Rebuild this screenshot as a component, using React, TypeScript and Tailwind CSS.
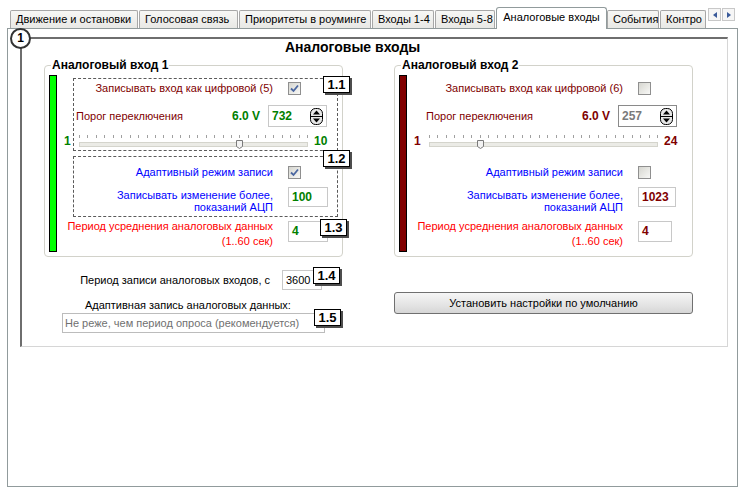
import React from 'react';

type GroupData = {
  n: number;
  title: string;
  bar: string;
  dash: string;
  tone: string;
  digital: boolean;
  adaptive: boolean;
  threshold: string;
  thresholdTone: string;
  thresholdBorder: string;
  max: string;
  thumb: number;
  adc: string;
  adcWidth: string;
  avgWidth: string;
  badges: boolean;
};

const groups: GroupData[] = [
  {
    n: 5,
    title: 'Аналоговый вход 1',
    bar: 'bg-[#00ff00]',
    dash: 'border-[#5a5a5a]',
    tone: 'text-[#008000]',
    digital: true,
    adaptive: true,
    threshold: '732',
    thresholdTone: 'text-[#008000]',
    thresholdBorder: 'border-[#c8c8c8]',
    max: '10',
    thumb: 157,
    adc: '100',
    adcWidth: 'w-[40px]',
    avgWidth: 'w-[40px]',
    badges: true,
  },
  {
    n: 6,
    title: 'Аналоговый вход 2',
    bar: 'bg-[#800000]',
    dash: 'border-transparent',
    tone: 'text-[#800000]',
    digital: false,
    adaptive: false,
    threshold: '257',
    thresholdTone: 'text-[#7a7a7a]',
    thresholdBorder: 'border-[#8a8a8a]',
    max: '24',
    thumb: 48,
    adc: '1023',
    adcWidth: 'w-[38px]',
    avgWidth: 'w-[34px]',
    badges: false,
  },
];

const tabs = [
  { label: 'Движение и остановки', w: 'w-[128px]', ml: 'ml-0' },
  { label: 'Голосовая связь', w: 'w-[99px]', ml: 'ml-[1px]' },
  { label: 'Приоритеты в роуминге', w: 'w-[132px]', ml: 'ml-[1px]' },
  { label: 'Входы 1-4', w: 'w-[62px]', ml: 'ml-[1px]' },
  { label: 'Входы 5-8', w: 'w-[60px]', ml: 'ml-[1px]' },
  { label: 'Аналоговые входы', w: 'w-[111px]', ml: 'ml-[1px]', active: true },
  { label: 'События', w: 'w-[52px]', ml: 'ml-0' },
  { label: 'Контро', w: 'w-[46px]', ml: 'ml-[1px]' },
];

function Badge({ text, className }: { text: string; className: string }) {
  return (
    <div
      className={`absolute z-10 flex h-[17px] w-[27px] items-center justify-center border border-black bg-white text-[13px] font-bold leading-none text-black shadow-[2px_2px_0_#4d4d4d] ${className}`}
    >
      {text}
    </div>
  );
}

function Check({ checked }: { checked: boolean }) {
  return (
    <div className="flex h-[13px] w-[13px] items-center justify-center border border-[#8f8f8f] bg-[linear-gradient(135deg,#d6d6d0,#f8f8f6)]">
      {checked && (
        <svg width="9" height="9" viewBox="0 0 9 9">
          <path d="M1 4.5 L3.5 7 L8 1.5" stroke="#4a66a0" strokeWidth="1.8" fill="none" />
        </svg>
      )}
    </div>
  );
}

function Spinner() {
  return (
    <svg width="13" height="17" viewBox="0 0 13 17">
      <rect x="0.5" y="0.5" width="12" height="16" rx="5" fill="#e6e6e6" stroke="#000" />
      <line x1="1" y1="8.5" x2="12" y2="8.5" stroke="#000" />
      <path d="M6.5 2.5 L10 6.5 L3 6.5Z" fill="#000" />
      <path d="M3 10.5 L10 10.5 L6.5 14.5Z" fill="#000" />
    </svg>
  );
}

function Slider({ thumb }: { thumb: number }) {
  const ticks = Array.from({ length: 28 }, (_, i) => Math.round((i * 228) / 27) + 0.5);
  return (
    <svg width="230" height="16" viewBox="0 0 230 16">
      {ticks.map((x) => (
        <line key={x} x1={x} y1="2" x2={x} y2="5" stroke="#a0a0a0" />
      ))}
      <rect x="0.5" y="9.5" width="228" height="4" fill="#ebebe6" stroke="#d4d4cc" />
      <path d={`M${thumb + 0.5} 7.5 h6 v6 l-3 2 l-3 -2z`} fill="#f2f2f2" stroke="#7a7a7a" />
    </svg>
  );
}

function Group({ g }: { g: GroupData }) {
  return (
    <div className="relative h-[192px] w-[299px] rounded-[4px] border border-[#d2d2ca]">
      <div className="absolute -top-[8px] left-[6px] bg-white px-[1px] text-[12px] font-bold leading-[14px] text-black">
        {g.title}
      </div>
      <div className="flex pl-[4px] pt-[9px]">
        <div className={`h-[177px] w-[8px] border border-black ${g.bar}`} />
        <div className="ml-[16px] mt-[3px] flex flex-col">
          <div className={`relative h-[73px] w-[265px] border border-dashed ${g.dash}`}>
            {g.badges && <Badge text="1.1" className="-top-[3px] left-[249px]" />}
            <div className="mt-[3px] flex h-[13px] items-center">
              <span className="w-[199px] whitespace-nowrap text-right text-[#800000]">Записывать вход как цифровой ({g.n})</span>
              <div className="ml-[15px]">
                <Check checked={g.digital} />
              </div>
            </div>
            <div className="mt-[10px] flex h-[22px] items-center">
              <span className="ml-[2px] w-[156px] text-[#800000]">Порог переключения</span>
              <span className={`w-[36px] text-[12px] font-bold ${g.tone}`}>6.0 V</span>
              <div className={`flex h-[22px] w-[59px] items-center justify-between border bg-white pl-[3px] pr-[3px] ${g.thresholdBorder}`}>
                <span className={`text-[12px] font-bold ${g.thresholdTone}`}>{g.threshold}</span>
                <Spinner />
              </div>
            </div>
            <div className="mt-[6px] flex h-[16px] items-center">
              <span className={`-ml-[10px] w-[15px] text-[12px] font-bold ${g.tone}`}>1</span>
              <Slider thumb={g.thumb} />
              <span className={`ml-[5px] text-[12px] font-bold ${g.tone}`}>{g.max}</span>
            </div>
          </div>

          <div className={`relative mt-[5px] h-[61px] w-[265px] border border-dashed ${g.dash}`}>
            {g.badges && <Badge text="1.2" className="-top-[7px] left-[249px]" />}
            <div className="mt-[9px] flex h-[13px] items-center">
              <span className="w-[199px] whitespace-nowrap text-right text-[#0000ff]">Адаптивный режим записи</span>
              <div className="ml-[15px]">
                <Check checked={g.adaptive} />
              </div>
            </div>
            <div className="mt-[8px] flex items-start">
              <div className="mt-[2px] flex w-[199px] flex-col items-end whitespace-nowrap leading-[12px] text-[#0000ff]">
                <span>Записывать изменение более,</span>
                <span>показаний АЦП</span>
              </div>
              <div className={`ml-[15px] flex h-[20px] items-center border border-[#c8c8c8] bg-white pl-[3px] ${g.adcWidth}`}>
                <span className={`text-[12px] font-bold ${g.tone}`}>{g.adc}</span>
              </div>
            </div>
          </div>

          <div className="relative mt-[4px] flex items-start pl-[1px]">
            {g.badges && <Badge text="1.3" className="-top-[2px] left-[247px]" />}
            <div className="-mt-[2px] flex w-[199px] flex-col items-end whitespace-nowrap leading-[15px] text-[#ff0000]">
              <span>Период усреднения аналоговых данных</span>
              <span>(1..60 сек)</span>
            </div>
            <div className={`ml-[15px] flex h-[21px] items-center border border-[#c8c8c8] bg-white pl-[3px] ${g.avgWidth}`}>
              <span className={`text-[12px] font-bold ${g.tone}`}>4</span>
            </div>
          </div>
        </div>
      </div>
    </div>
  );
}

function TabArrow({ dir }: { dir: 'left' | 'right' }) {
  return (
    <div className="flex h-[13px] w-[13px] items-center justify-center border border-[#c8c8c8] bg-[#f6f6f6]">
      <svg width="4" height="6" viewBox="0 0 4 6">
        {dir === 'left' ? <path d="M4 0 L0 3 L4 6Z" fill="#3a5a9a" /> : <path d="M0 0 L4 3 L0 6Z" fill="#3a5a9a" />}
      </svg>
    </div>
  );
}

export default function App() {
  return (
    <div className="h-[489px] w-[741px] overflow-hidden bg-white font-['Liberation_Sans',Arial,sans-serif] text-[11px] leading-[13px] text-black">
      <div className="flex h-[28px] items-end pl-[10px]">
        {tabs.map((t) =>
          t.active ? (
            <div
              key={t.label}
              className={`relative z-10 -mb-[1px] flex h-[22px] items-center justify-center rounded-t-[3px] border border-b-0 border-[#919b9c] bg-white pb-[2px] ${t.w} ${t.ml}`}
            >
              {t.label}
            </div>
          ) : (
            <div
              key={t.label}
              className={`flex h-[18px] items-center overflow-hidden whitespace-nowrap rounded-t-[2px] border border-b-0 border-[#a7a7a7] bg-[linear-gradient(#f7f7f5,#e8e8e5)] px-[5px] ${t.w} ${t.ml}`}
            >
              {t.label}
            </div>
          ),
        )}
        <div className="mb-[7px] ml-[2px] flex gap-[1px]">
          <TabArrow dir="left" />
          <TabArrow dir="right" />
        </div>
      </div>

      <div className="ml-[7px] h-[459px] w-[731px] border border-[#919b9c] bg-white">
        <div className="relative ml-[12px] mt-[8px] h-[310px] w-[708px] border-b border-l-2 border-r border-t-2 border-b-[#d6d6d6] border-l-[#6e6e6e] border-r-[#d6d6d6] border-t-[#6e6e6e]">
          <div className="absolute -left-[12px] -top-[11px] flex h-[21px] w-[21px] items-center justify-center rounded-full border-2 border-[#333] bg-white text-[12px] font-bold">
            1
          </div>

          <div className="h-[17px] pl-[263px] text-[14px] font-bold leading-[17px]">Аналоговые входы</div>

          <div className="mt-[9px] flex gap-[51px] pl-[22px]">
            {groups.map((g) => (
              <Group key={g.n} g={g} />
            ))}
          </div>

          <div className="flex gap-[51px] pl-[22px]">
            <div className="w-[299px]">
              <div className="relative mt-[13px] flex h-[20px] items-center">
                <span className="w-[226px] text-right">Период записи аналоговых входов, с</span>
                <div className="ml-[12px] flex h-[20px] w-[40px] items-center border border-[#c8c8c8] bg-white pl-[3px]">3600</div>
                <Badge text="1.4" className="-top-[3px] left-[269px]" />
              </div>
              <div className="ml-[41px] mt-[7px] leading-[16px]">Адаптивная запись аналоговых данных:</div>
              <div className="relative ml-[18px] flex h-[20px] w-[263px] items-center border border-[#bcbcbc] bg-white pl-[2px] text-[#707070]">
                Не реже, чем период опроса (рекомендуется)
                <Badge text="1.5" className="-top-[5px] left-[251px]" />
              </div>
            </div>
            <div className="w-[299px]">
              <button className="mt-[35px] flex h-[22px] w-[299px] items-center justify-center rounded-[3px] border border-[#707070] bg-[linear-gradient(#f6f6f6,#e4e4e4_60%,#d6d6d6)] text-[11px]">
                Установить настройки по умолчанию
              </button>
            </div>
          </div>
        </div>
      </div>
    </div>
  );
}
